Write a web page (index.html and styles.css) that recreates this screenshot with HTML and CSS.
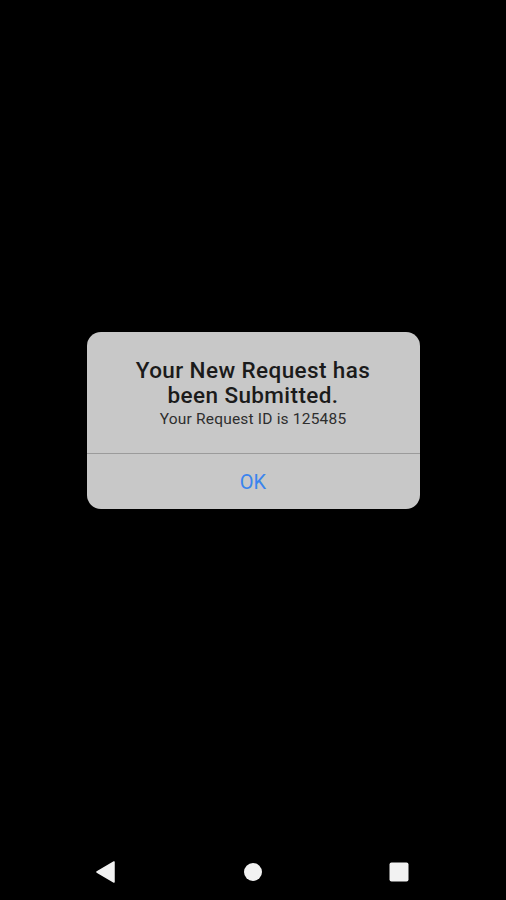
FILE: index.html
```html
<!DOCTYPE html>
<html lang="en">
<head>
  <meta charset="UTF-8">
  <title>Request Submitted</title>
  <link rel="stylesheet" href="styles.css">
</head>
<body>
  <div class="screen">
    <div class="content">
      <div class="dialog">
        <div class="dialog-body">
          <h2 class="dialog-title">Your New Request has been Submitted.</h2>
          <p class="dialog-text">Your Request ID is 125485</p>
        </div>
        <button class="dialog-button">OK</button>
      </div>
    </div>
    <div class="navbar">
      <svg class="nav-icon" width="20" height="22" viewBox="0 0 20 22">
        <path d="M18 1 L18 21 L1 11 Z" fill="#f2f2f2" stroke="#f2f2f2" stroke-width="1.5" stroke-linejoin="round"/>
      </svg>
      <svg class="nav-icon" width="20" height="20" viewBox="0 0 20 20">
        <circle cx="10" cy="10" r="9" fill="#f2f2f2"/>
      </svg>
      <svg class="nav-icon" width="20" height="20" viewBox="0 0 20 20">
        <rect x="0.5" y="0.5" width="19" height="19" rx="2" fill="#f2f2f2"/>
      </svg>
    </div>
  </div>
</body>
</html>
```

FILE: styles.css
```css
body {
  margin: 0;
  padding: 0;
  background-color: #000;
  font-family: Roboto, "Liberation Sans", sans-serif;
}
.screen {
  width: 506px;
  height: 900px;
  display: flex;
  flex-direction: column;
}
.content {
  flex: 1;
  display: flex;
  justify-content: center;
  padding-top: 332px;
}
.dialog {
  width: 333px;
  height: 177px;
  background-color: #c8c8c8;
  border-radius: 14px;
  display: flex;
  flex-direction: column;
}
.dialog-body {
  height: 122px;
  box-sizing: border-box;
  padding-top: 26px;
  border-bottom: 1px solid #9b9b9b;
  text-align: center;
}
.dialog-title {
  margin: 0 auto;
  width: 260px;
  font-size: 22.5px;
  font-weight: 500;
  line-height: 25px;
  color: #1b1b1b;
  letter-spacing: 0.4px;
}
.dialog-text {
  margin: 2px 0 0;
  font-size: 15.5px;
  line-height: 19px;
  color: #2e2e2e;
  letter-spacing: 0.2px;
}
.dialog-button {
  flex: 1;
  border: none;
  background: none;
  font-family: Roboto, "Liberation Sans", sans-serif;
  font-size: 20px;
  color: #3a84ee;
  padding: 0;
  cursor: pointer;
}
.navbar {
  height: 56px;
  display: flex;
  justify-content: space-between;
  align-items: center;
  padding: 0 97px 0 96px;
}
```
